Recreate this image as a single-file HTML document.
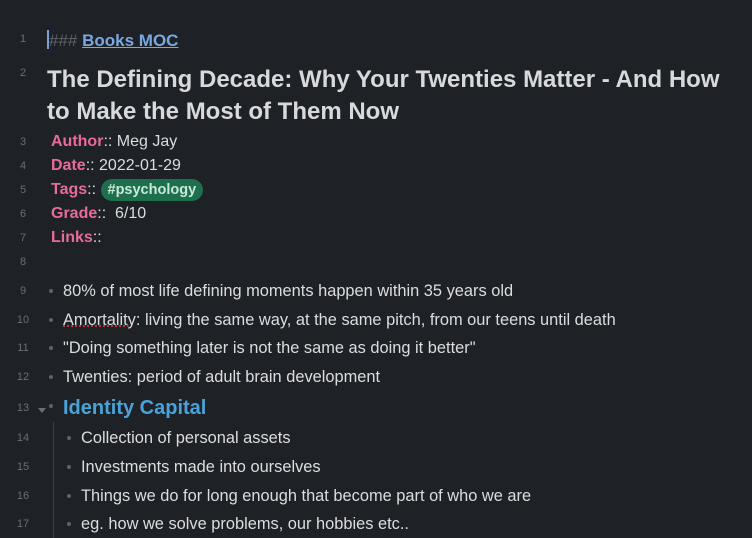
<!DOCTYPE html><html><head><style>
body{margin:0;width:752px;height:538px;background:#1e2126;overflow:hidden;font-family:"Liberation Sans",sans-serif;color:#dcdde0;position:relative}
.r{position:absolute;white-space:nowrap;line-height:1}
.n{position:absolute;left:13px;width:20px;text-align:center;font-size:11px;color:#6b6f76;line-height:1}
.k{color:#e86a9e;font-weight:bold}
.d{position:absolute;width:4px;height:4px;border-radius:50%;background:#5d6168}
.t{font-size:16.4px}
.m{font-size:16px}
</style></head><body>
<div class="n" style="top:34px">1</div>
<div class="r" style="left:47px;top:30px;font-size:17px"><span style="display:inline-block;width:2px;height:19px;background:#7aa0d6;vertical-align:-3px"></span><span style="color:#5f636a">###</span> <span style="color:#7aa8e0;font-weight:bold;text-decoration:underline">Books MOC</span></div>
<div class="n" style="top:68px">2</div>
<div class="r" style="left:47px;top:64px;font-size:24px;font-weight:bold;line-height:32px;color:#d8d9dc">The Defining Decade: Why Your Twenties Matter - And How<br>to Make the Most of Them Now</div>
<div class="n" style="top:137px">3</div><div class="r m" style="left:51px;top:134px"><span class="k">Author</span>:: Meg Jay</div>
<div class="n" style="top:161px">4</div><div class="r m" style="left:51px;top:158px"><span class="k">Date</span>:: 2022-01-29</div>
<div class="n" style="top:185px">5</div><div class="r m" style="left:51px;top:182px"><span class="k">Tags</span>:: <span style="background:#1e6f4e;color:#c9e8d8;font-weight:bold;border-radius:11px;padding:3px 7px;font-size:14.5px">#psychology</span></div>
<div class="n" style="top:209px">6</div><div class="r m" style="left:51px;top:206px"><span class="k">Grade</span>::&nbsp; 6/10</div>
<div class="n" style="top:233px">7</div><div class="r m" style="left:51px;top:230px"><span class="k">Links</span>::</div>
<div class="n" style="top:257px">8</div>
<div class="n" style="top:286px">9</div><div class="d" style="left:49px;top:289px"></div><div class="r t" style="left:63px;top:283px">80% of most life defining moments happen within 35 years old</div>
<div class="n" style="top:315px">10</div><div class="d" style="left:49px;top:318px"></div><div class="r t" style="left:63px;top:312px"><span style="text-decoration:underline dotted #d04040">Amortality</span>: living the same way, at the same pitch, from our teens until death</div>
<div class="n" style="top:343px">11</div><div class="d" style="left:49px;top:346px"></div><div class="r t" style="left:63px;top:340px">"Doing something later is not the same as doing it better"</div>
<div class="n" style="top:372px">12</div><div class="d" style="left:49px;top:375px"></div><div class="r t" style="left:63px;top:369px">Twenties: period of adult brain development</div>
<div class="n" style="top:403px">13</div><div style="position:absolute;left:38px;top:408px;width:0;height:0;border-left:4px solid transparent;border-right:4px solid transparent;border-top:5px solid #6b6f76"></div><div class="d" style="left:49px;top:404px"></div><div class="r" style="left:63px;top:398px;font-size:20px;font-weight:bold;color:#4aa3d8">Identity Capital</div>
<div style="position:absolute;left:53px;top:422px;width:1px;height:116px;background:#3a3d43"></div>
<div class="n" style="top:433px">14</div><div class="d" style="left:67px;top:436px"></div><div class="r t" style="left:81px;top:430px">Collection of personal assets</div>
<div class="n" style="top:462px">15</div><div class="d" style="left:67px;top:465px"></div><div class="r t" style="left:81px;top:459px">Investments made into ourselves</div>
<div class="n" style="top:491px">16</div><div class="d" style="left:67px;top:494px"></div><div class="r t" style="left:81px;top:488px">Things we do for long enough that become part of who we are</div>
<div class="n" style="top:519px">17</div><div class="d" style="left:67px;top:522px"></div><div class="r t" style="left:81px;top:516px">eg. how we solve problems, our hobbies etc..</div>
</body></html>
